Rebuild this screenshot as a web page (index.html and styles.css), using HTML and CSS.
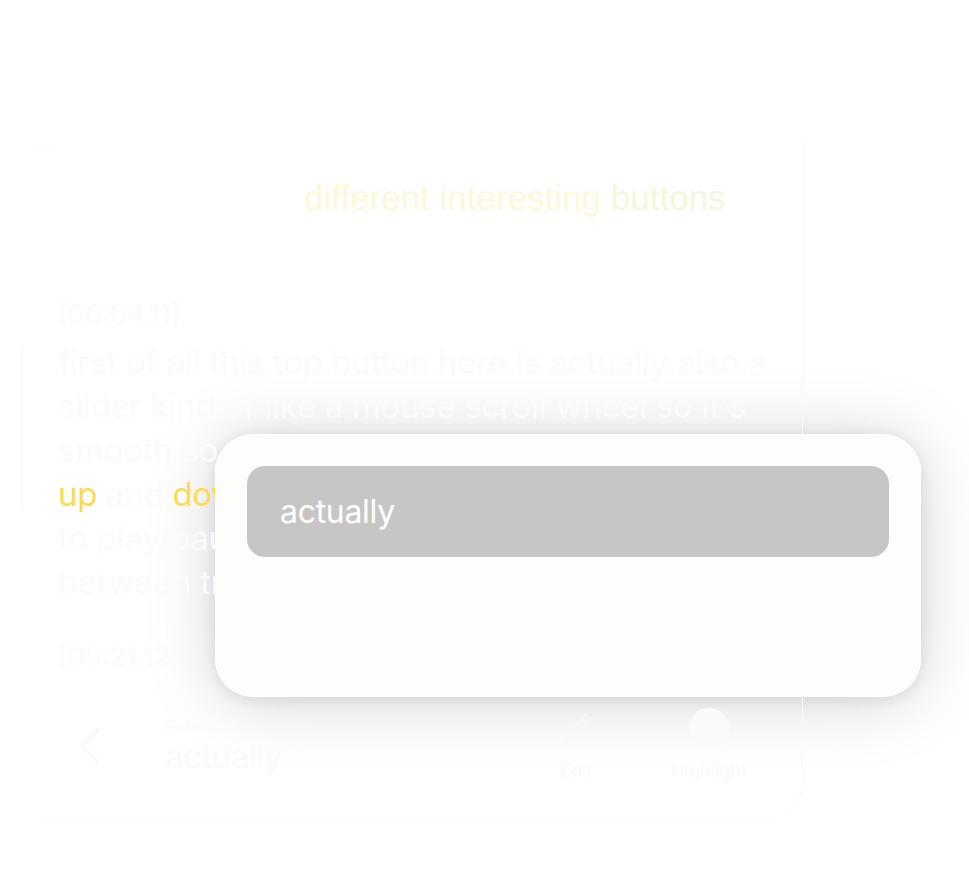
FILE: index.html
```html
<!DOCTYPE html>
<html lang="en">
<head>
<meta charset="utf-8">
<title>Reader menu</title>
<link rel="stylesheet" href="styles.css">
</head>
<body>
<div class="app">
  <div class="menu-shadow"></div>
  <div class="panel">
    <div class="panel-tab"></div>
    <div class="title"><span class="t-yellow">different interesting</span> <span class="t-green">buttons</span></div>
    <div class="stamp stamp-first">[00:04.11]</div>
    <div class="para">
      <div class="line">first of all this top button here is actually also a</div>
      <div class="line">slider kind of like a mouse scroll wheel so it's</div>
      <div class="line">smooth so going</div>
      <div class="line"><span class="hl">up</span> and <span class="hl">down</span></div>
      <div class="line">to play/pause</div>
      <div class="line">between tracks</div>
    </div>
    <div class="stamp stamp-second">[00:21.12]</div>
    <div class="bar">
      <div class="back">
        <svg width="26" height="40" viewBox="0 0 26 40"><path d="M21 4 L5 20 L21 36" fill="none" stroke="#f8f8f8" stroke-width="3" stroke-linecap="round" stroke-linejoin="round"/></svg>
      </div>
      <div class="selected">
        <div class="sel-label">Selected</div>
        <div class="sel-word">actually</div>
      </div>
      <div class="action action-edit">
        <svg width="40" height="40" viewBox="0 0 40 40"><path d="M10 32 L12 24 L28 8 a3 3 0 0 1 4.5 4.5 L16.5 28.5 Z M25 11 L29.5 15.5" fill="none" stroke="#f7f7f7" stroke-width="2.2" stroke-linejoin="round"/></svg>
        <div class="act-label">Edit</div>
      </div>
      <div class="action action-hl">
        <div class="hl-dot"></div>
        <div class="act-label">Highlight</div>
      </div>
    </div>
  </div>
  <div class="menu">
    <div class="menu-item">actually</div>
  </div>
</div>
</body>
</html>
```
FILE: styles.css
```css
html, body {
  margin: 0;
  padding: 0;
  background: #ffffff;
}
body {
  font-family: Inter, "Liberation Sans", Arial, sans-serif;
}
.app {
  position: relative;
  width: 969px;
  height: 888px;
  overflow: hidden;
  background: #ffffff;
}
.menu-shadow {
  position: absolute;
  left: 215px;
  top: 434px;
  width: 706px;
  height: 263px;
  border-radius: 38px;
  box-shadow: 0 4px 70px rgba(0, 0, 0, 0.17), 0 2px 16px rgba(0, 0, 0, 0.09);
  z-index: 0;
}
.panel {
  position: relative;
  z-index: 1;
  margin: 140px 0 0 15px;
  padding-top: 38px;
  width: 788px;
  height: 678px;
  border-right: 1px solid #f8f8f8;
  border-bottom: 1px solid #fcfcfc;
  border-radius: 0 0 34px 34px;
  box-sizing: border-box;
  color: #fbfbfb;
}
.panel-tab {
  position: absolute;
  left: 16px;
  top: 8px;
  width: 20px;
  height: 2px;
  background: #fafafa;
}
.title {
  padding-left: 289px;
  height: 40px;
  line-height: 40px;
  font-family: "Liberation Sans", Arial, sans-serif;
  font-size: 35px;
  letter-spacing: 0;
  white-space: nowrap;
}
.t-yellow { color: #fef8d9; }
.t-green { color: #f2f9da; }
.stamp {
  padding-left: 43px;
  height: 30px;
  line-height: 30px;
  font-size: 27px;
  color: #fbfbfb;
}
.stamp-first { margin-top: 82px; }
.para {
  margin-top: 10px;
  padding-left: 43px;
  font-size: 33px;
  letter-spacing: -0.3px;
  color: #fbfbfb;
  position: relative;
}
.para::before {
  content: "";
  position: absolute;
  left: 6px;
  top: 5px;
  width: 2px;
  height: 165px;
  background: #fafafa;
}
.line {
  height: 44px;
  line-height: 44px;
  white-space: nowrap;
}
.hl { color: #fbdb52; }
.stamp-second { margin-top: 38px; }
.bar {
  margin-top: 28px;
  height: 90px;
  display: flex;
  align-items: flex-start;
}
.back {
  width: 30px;
  margin-left: 62px;
  margin-top: 26px;
}
.selected {
  margin-left: 58px;
  margin-top: 16px;
}
.sel-label {
  font-size: 17px;
  line-height: 22px;
  color: #fbfbfb;
}
.sel-word {
  font-size: 33px;
  line-height: 36px;
  letter-spacing: -0.5px;
  color: #fafafa;
}
.action {
  display: flex;
  flex-direction: column;
  align-items: center;
}
.action-edit {
  margin-left: auto;
  width: 60px;
  margin-top: 8px;
}
.action-hl {
  width: 110px;
  margin-left: 48px;
  margin-right: 38px;
  margin-top: 8px;
}
.hl-dot {
  width: 40px;
  height: 40px;
  border-radius: 50%;
  background: #fafafa;
}
.act-label {
  margin-top: 12px;
  font-size: 18px;
  line-height: 22px;
  color: #fafafa;
}
.menu {
  position: absolute;
  z-index: 2;
  left: 215px;
  top: 434px;
  width: 706px;
  height: 263px;
  border-radius: 38px;
  background: #fdfdfc;
  padding: 32px;
  box-sizing: border-box;
}
.menu-item {
  height: 91px;
  border-radius: 18px;
  background: #c7c6c5;
  color: #ffffff;
  font-size: 32px;
  line-height: 91px;
  padding-left: 33px;
  letter-spacing: -0.3px;
}
```
